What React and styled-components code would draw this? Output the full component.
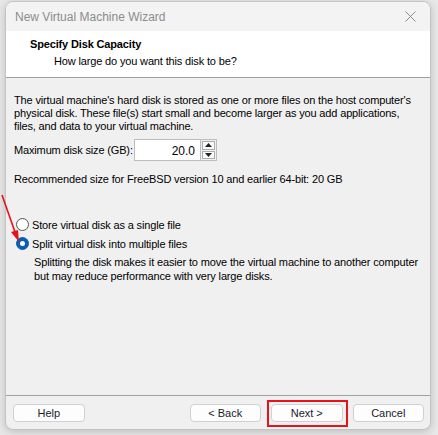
import React from "react";
import styled, { createGlobalStyle } from "styled-components";

const GlobalStyle = createGlobalStyle`
  html, body {
    margin: 0;
    padding: 0;
    background: #e8e8e8;
  }
  body {
    font-family: "Liberation Sans", Arial, sans-serif;
    font-size: 11px;
    letter-spacing: -0.15px;
    color: #000;
    white-space: nowrap;
  }
`;

const Stage = styled.div`
  position: relative;
  width: 438px;
  height: 435px;
  padding: 1px 0 0 5px;
  box-sizing: border-box;
`;

const Window = styled.div`
  width: 426px;
  height: 429px;
  box-sizing: border-box;
  display: flex;
  flex-direction: column;
  border: 1px solid #c4c4c4;
  border-radius: 8px;
  overflow: hidden;
  background: #f0f0f0;
  box-shadow: 0 2px 8px rgb(0 0 0 / 18%);
`;

const TitleBar = styled.div`
  height: 29px;
  display: flex;
  align-items: center;
  justify-content: space-between;
  padding: 0 14px 0 9px;
  background: #f3f3f3;
  font-size: 12px;
  letter-spacing: 0;
  color: #8c8c8c;
`;

const Header = styled.div`
  height: 47px;
  box-sizing: border-box;
  background: #fff;
  border-bottom: 1px solid #a0a0a0;
  padding: 6px 0 0 24px;
`;

const Heading = styled.div`
  font-weight: bold;
  font-size: 11px;
  line-height: 14px;
`;

const SubHeading = styled.div`
  margin: 3px 0 0 24px;
  line-height: 14px;
`;

const Body = styled.div`
  flex: 1;
  padding: 16px 8px 0 8px;
`;

const Paragraph = styled.p`
  margin: 0;
  line-height: 13px;
`;

const SizeRow = styled.div`
  display: flex;
  align-items: center;
  margin-top: 6px;
  height: 22px;
`;

const SizeLabel = styled.span`
  width: 120px;
`;

const SizeInput = styled.div`
  width: 66px;
  height: 22px;
  box-sizing: border-box;
  background: #fff;
  border: 1px solid #bdbdbd;
  border-right: none;
  text-align: right;
  padding: 4px 5px 0 0;
  font-size: 12px;
  letter-spacing: 0;
`;

const Spinner = styled.div`
  width: 17px;
  height: 22px;
  box-sizing: border-box;
  border: 1px solid #bdbdbd;
  display: flex;
  flex-direction: column;
  padding: 1px;
  gap: 1px;
`;

const SpinButton = styled.div`
  flex: 1;
  border: 1px solid #adadad;
  background: #fafafa;
  display: flex;
  align-items: center;
  justify-content: center;
`;

const Recommended = styled.p`
  margin: 12px 0 0 0;
  line-height: 13px;
`;

const RadioGroup = styled.div`
  margin-top: 32px;
  display: flex;
  flex-direction: column;
  gap: 6px;
`;

const RadioRow = styled.label`
  display: flex;
  align-items: center;
  gap: 3px;
  height: 13px;
  padding-left: 2px;
`;

const RadioCircle = styled.span`
  width: 13px;
  height: 13px;
  box-sizing: border-box;
  border-radius: 50%;
  display: flex;
  align-items: center;
  justify-content: center;
  background: ${(p) => (p.$checked ? "#0a5fb4" : "#fff")};
  border: 1px solid ${(p) => (p.$checked ? "#0a5fb4" : "#555")};
  &::after {
    content: "";
    display: ${(p) => (p.$checked ? "block" : "none")};
    width: 5px;
    height: 5px;
    border-radius: 50%;
    background: #fff;
  }
`;

const Description = styled.p`
  margin: 5px 0 0 20px;
  line-height: 14px;
`;

const Footer = styled.div`
  border-top: 1px solid #a0a0a0;
  height: 34px;
  display: flex;
  align-items: flex-start;
  padding: 8px 6px 0 7px;
  box-sizing: border-box;
`;

const Button = styled.div`
  position: relative;
  width: 72px;
  height: 18px;
  box-sizing: border-box;
  border: 1px solid #d0d0d0;
  border-radius: 4px;
  background: #fdfdfd;
  display: flex;
  align-items: center;
  justify-content: center;
  margin-left: ${(p) => p.$gap || 0}px;
  color: #1a1a2e;
  letter-spacing: 0;
  ${(p) =>
    p.$marked &&
    `
    &::after {
      content: "";
      position: absolute;
      left: -5px;
      top: -5px;
      right: -6px;
      bottom: -6px;
      border: 2px solid #e8121a;
    }
  `}
`;

const Arrow = styled.svg`
  position: absolute;
  left: 0;
  top: 190px;
`;

function CloseIcon() {
  return (
    <svg width="11" height="11" viewBox="0 0 11 11">
      <path d="M0.5 0.5 L10.5 10.5 M10.5 0.5 L0.5 10.5" stroke="#8a8a8a" strokeWidth="1" />
    </svg>
  );
}

function Caret({ up }) {
  return (
    <svg width="7" height="4" viewBox="0 0 7 4">
      <path d={up ? "M0 4 L3.5 0 L7 4 Z" : "M0 0 L3.5 4 L7 0 Z"} fill="#222" />
    </svg>
  );
}

export default function App() {
  return (
    <Stage>
      <GlobalStyle />
      <Window>
        <TitleBar>
          <span>New Virtual Machine Wizard</span>
          <CloseIcon />
        </TitleBar>
        <Header>
          <Heading>Specify Disk Capacity</Heading>
          <SubHeading>How large do you want this disk to be?</SubHeading>
        </Header>
        <Body>
          <Paragraph>
            The virtual machine's hard disk is stored as one or more files on the host computer's
            <br />
            physical disk. These file(s) start small and become larger as you add applications,
            <br />
            files, and data to your virtual machine.
          </Paragraph>
          <SizeRow>
            <SizeLabel>Maximum disk size (GB):</SizeLabel>
            <SizeInput>20.0</SizeInput>
            <Spinner>
              <SpinButton>
                <Caret up />
              </SpinButton>
              <SpinButton>
                <Caret />
              </SpinButton>
            </Spinner>
          </SizeRow>
          <Recommended>Recommended size for FreeBSD version 10 and earlier 64-bit: 20 GB</Recommended>
          <RadioGroup>
            <RadioRow>
              <RadioCircle />
              Store virtual disk as a single file
            </RadioRow>
            <RadioRow>
              <RadioCircle $checked />
              Split virtual disk into multiple files
            </RadioRow>
          </RadioGroup>
          <Description>
            Splitting the disk makes it easier to move the virtual machine to another computer
            <br />
            but may reduce performance with very large disks.
          </Description>
        </Body>
        <Footer>
          <Button>Help</Button>
          <Button $gap={105}>&lt; Back</Button>
          <Button $gap={10} $marked>
            Next &gt;
          </Button>
          <Button $gap={10}>Cancel</Button>
        </Footer>
      </Window>
      <Arrow width="26" height="56" viewBox="0 0 26 56">
        <path d="M2 5 L15 42" stroke="#e8121a" strokeWidth="1.6" fill="none" />
        <path d="M19 52 L11 42 L18 40 Z" fill="#e8121a" />
      </Arrow>
    </Stage>
  );
}
